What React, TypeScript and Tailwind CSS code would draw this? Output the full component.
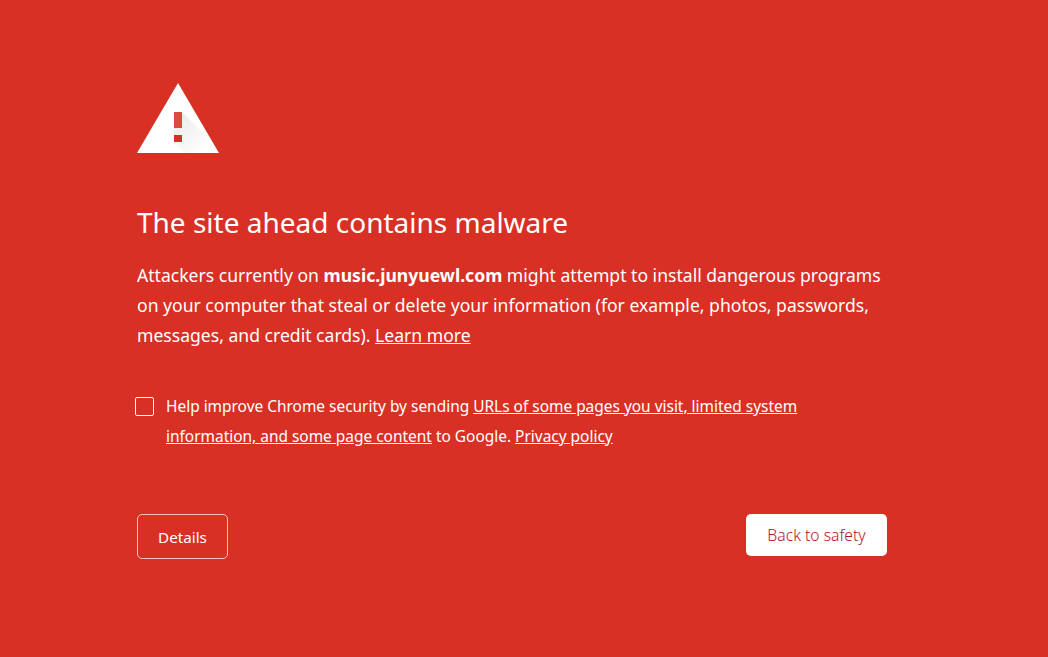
const font = { fontFamily: '"Noto Sans", "Open Sans", sans-serif' };

function WarningIcon() {
  return (
    <svg width="82" height="70" viewBox="0 0 82 70" className="block">
      <defs>
        <linearGradient id="shade" gradientUnits="userSpaceOnUse" x1="41" y1="40" x2="68" y2="67">
          <stop offset="0" stopColor="#000" stopOpacity="0.07" />
          <stop offset="1" stopColor="#000" stopOpacity="0" />
        </linearGradient>
        <clipPath id="tri">
          <path d="M41 0L82 70H0Z" />
        </clipPath>
      </defs>
      <path d="M41 0L82 70H0Z" fill="#fff" />
      <g clipPath="url(#tri)">
        <path d="M45 29L82 66V70H48L37 59V29Z" fill="url(#shade)" />
      </g>
      <rect x="37" y="29" width="8" height="16" fill="#dd4b40" />
      <rect x="37" y="52" width="8" height="7" fill="#d93025" />
    </svg>
  );
}

export default function App() {
  return (
    <div className="min-h-[657px] bg-[#d93025] text-white pt-[83px] pl-[137px]" style={font}>
      <div className="w-[750px]">
        <WarningIcon />

        <h1 className="mt-[49px] text-[28px] leading-[40px] font-normal">
          The site ahead contains malware
        </h1>

        <p className="mt-[18px] text-[17.58px] leading-[30px] w-[750px]">
          Attackers currently on <strong className="font-bold">music.junyuewl.com</strong> might attempt to install dangerous programs on your computer that steal or delete your information (for example, photos, passwords, messages, and credit cards).{" "}
          <a className="underline">Learn more</a>
        </p>

        <div className="mt-[41px] flex -ml-0.5">
          <div className="mt-[6px] w-[19px] h-[19px] shrink-0 rounded-[2px] border border-white" />
          <p className="ml-3 text-[15.45px] leading-[30px]">
            Help improve Chrome security by sending <a className="underline">URLs of some pages you visit, limited system information, and some page content</a> to Google. <a className="underline">Privacy policy</a>
          </p>
        </div>

        <div className="mt-[63px] flex items-start justify-between">
          <button className="w-[91px] h-[45px] pt-px rounded-[5px] border border-white/70 text-[15.2px] text-white">
            Details
          </button>
          <button className="w-[141px] h-[42px] pt-0.5 rounded-[5px] bg-white text-[15.7px] font-light text-[#b3172b]">
            Back to safety
          </button>
        </div>
      </div>
    </div>
  );
}
